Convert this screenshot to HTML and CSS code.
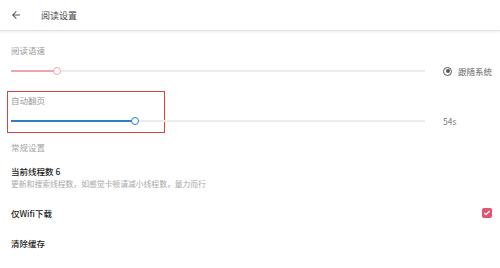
FILE: index.html
```html
<!DOCTYPE html>
<html lang="zh">
<head>
<meta charset="utf-8">
<link rel="stylesheet" href="styles.css">
</head>
<body>
<header class="topbar">
  <svg class="back" width="12" height="12" viewBox="0 0 24 24"><path d="M20 11H7.8l5.6-5.6L12 4l-8 8 8 8 1.4-1.4L7.8 13H20z" fill="#555"/></svg>
  <span class="title">阅读设置</span>
</header>
<main class="content">
  <section class="group first">
    <div class="label">阅读语速</div>
    <div class="slider-row">
      <div class="track">
        <div class="fill pink" style="width:46px"></div>
        <div class="thumb pink-thumb" style="left:46px"></div>
      </div>
      <div class="side">
        <span class="radio"><span class="dot"></span></span>
        <span class="side-text">跟随系统</span>
      </div>
    </div>
  </section>
  <section class="group highlight">
    <div class="label">自动翻页</div>
    <div class="slider-row">
      <div class="track">
        <div class="fill blue" style="width:124px"></div>
        <div class="thumb blue-thumb" style="left:124px"></div>
      </div>
      <div class="side"><span class="value">54s</span></div>
    </div>
  </section>
  <div class="section-title">常规设置</div>
  <div class="item two-line">
    <div class="item-title">当前线程数 6</div>
    <div class="item-desc">更新和搜索线程数，如感觉卡顿请减小线程数，量力而行</div>
  </div>
  <div class="item row">
    <div class="item-title">仅Wifi下载</div>
    <span class="checkbox"><svg width="8" height="8" viewBox="0 0 24 24"><path d="M4 12l5 5L20 6" fill="none" stroke="#fff" stroke-width="4"/></svg></span>
  </div>
  <div class="item row">
    <div class="item-title">清除缓存</div>
  </div>
</main>
</body>
</html>
```
FILE: styles.css
```css
* { box-sizing: border-box; }
body {
  margin: 0;
  width: 500px;
  height: 268px;
  overflow: hidden;
  background: #fff;
  font-family: "Noto Sans CJK SC", "Noto Sans", sans-serif;
  color: #333;
}
.topbar {
  height: 31px;
  display: flex;
  align-items: center;
  padding-left: 10px;
  border-bottom: 1px solid #e2e2e2;
  box-shadow: 0 1px 2px rgba(0,0,0,0.08);
}
.back { margin-right: 19px; }
.title { font-size: 9px; color: #444; }
.group {
  margin-left: 7px;
  width: 493px;
  height: 42px;
  padding: 2px 0 0 3px;
  border: 1px solid transparent;
  border-right: none;
}
.group.first { margin-top: 10px; margin-bottom: 8px; }
.highlight {
  border: 1px solid #d9403f;
  width: 158px;
}
.label { font-size: 8.5px; color: #9a9a9a; line-height: 12px; }
.slider-row {
  display: flex;
  align-items: center;
  height: 16px;
  margin-top: 7px;
  width: 485px;
}
.track {
  position: relative;
  width: 414px;
  height: 2px;
  background: #ececec;
  flex: none;
}
.fill { position: absolute; left: 0; top: 0; height: 2px; }
.pink { background: #f0a4b2; }
.blue { background: #2f7ec7; }
.thumb {
  position: absolute;
  top: -3px;
  width: 8px;
  height: 8px;
  margin-left: -4px;
  border-radius: 50%;
  background: #fff;
}
.pink-thumb { border: 1.5px solid #f0a4b2; }
.blue-thumb { border: 1.5px solid #2f7ec7; }
.side {
  display: flex;
  align-items: center;
  margin-left: 18px;
  font-size: 8.5px;
  color: #666;
}
.radio {
  width: 9px; height: 9px;
  border-radius: 50%;
  border: 1.2px solid #555;
  display: flex; align-items: center; justify-content: center;
  margin-right: 6px;
}
.dot { width: 4px; height: 4px; border-radius: 50%; background: #555; }
.side-text { color: #666; }
.value { color: #777; font-size: 8.5px; }
.section-title {
  font-size: 8.5px;
  color: #a5a5a5;
  padding-left: 11px;
  margin-top: 8px;
  line-height: 12px;
}
.item { padding-left: 11px; padding-right: 8px; }
.two-line { margin-top: 12px; }
.item-title { font-size: 8.5px; color: #222; line-height: 12px; font-weight: 500; }
.item-desc { font-size: 7.8px; color: #a8a8a8; line-height: 12px; margin-top: 1px; }
.row {
  display: flex;
  justify-content: space-between;
  align-items: center;
  height: 30px;
}
.two-line + .row { margin-top: 8px; }
.checkbox {
  width: 10px; height: 10px;
  background: #e2546f;
  border-radius: 2px;
  display: flex; align-items: center; justify-content: center;
}
```
